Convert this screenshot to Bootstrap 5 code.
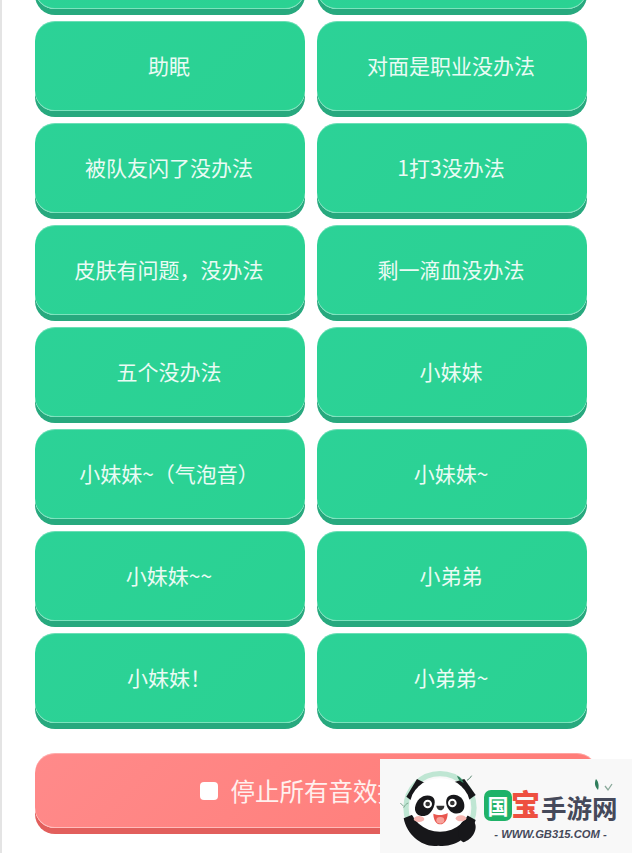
<!DOCTYPE html>
<html lang="zh">
<head>
<meta charset="utf-8">
<title>音效</title>
<link rel="stylesheet" href="https://cdn.jsdelivr.net/npm/bootstrap@5.3.0/dist/css/bootstrap.min.css">
<style>
html,body{height:853px;overflow:hidden;background:#fff}
body{font-family:"Noto Sans CJK SC","Noto Sans",sans-serif;border-left:2px solid #e4e4e4}
.sheet{padding:0 33px;margin-top:-81px;width:630px}
.sound-grid{display:grid;grid-template-columns:270px 270px;gap:12px;margin-bottom:30px}
.snd{height:90px;border:0;border-radius:20px;color:#eafbf4;font-size:21px;line-height:1;padding:0 2px 1px 0;
 background:linear-gradient(135deg,#2cd297,#2ad292);
 box-shadow:0 6px 0 #27a97e,inset 0 -1px 0 rgba(255,255,255,.38),inset 0 1px 0 rgba(255,255,255,.3)}
.snd-stop{width:562px;height:75px;border:0;border-radius:20px;color:#fff0ee;font-size:24.5px;line-height:1;padding:1px 6px 0 0;
 background:linear-gradient(135deg,#ff8a8a,#ff7b76);
 box-shadow:0 6px 0 #e25f5c,inset 0 -1px 0 rgba(255,255,255,.45),inset 0 1px 0 rgba(255,255,255,.3)}
.stop-mark{width:18px;height:18px;border-radius:4px;background:#fff;margin-right:13px}
.stamp{position:absolute;left:380px;top:759px;width:252px;height:94px;background:#f8f8f8}
.panda{position:absolute;left:15px;top:6px;width:90px;height:88px}
.sprig{position:absolute;left:214px;top:20px;width:20px;height:14px}
.stamp-words{position:absolute;left:104px;top:31px;width:138px}
.guo{width:28px;height:31px;border-radius:7px;background:#1fb268;color:#fff;font-size:21px;font-weight:700;line-height:1;flex:none}
.bao{color:#ee5040;font-size:29px;font-weight:900;line-height:1;margin-left:-1px;margin-top:-4px}
.shou{color:#45495a;font-size:25.5px;font-weight:700;line-height:1;margin-left:1px;letter-spacing:0;white-space:nowrap;margin-top:3px}
.url{color:#45495a;font-family:"Liberation Sans",sans-serif;font-size:11.2px;font-weight:700;font-style:italic;text-align:center;margin-top:8px;white-space:nowrap;line-height:1;padding-right:5px}
</style>
</head>
<body>
<main class="sheet">
  <div class="sound-grid">
    <button class="snd" type="button"></button>
    <button class="snd" type="button"></button>
    <button class="snd" type="button">助眠</button>
    <button class="snd" type="button">对面是职业没办法</button>
    <button class="snd" type="button">被队友闪了没办法</button>
    <button class="snd" type="button">1打3没办法</button>
    <button class="snd" type="button">皮肤有问题，没办法</button>
    <button class="snd" type="button">剩一滴血没办法</button>
    <button class="snd" type="button">五个没办法</button>
    <button class="snd" type="button">小妹妹</button>
    <button class="snd" type="button">小妹妹~（气泡音）</button>
    <button class="snd" type="button">小妹妹~</button>
    <button class="snd" type="button">小妹妹~~</button>
    <button class="snd" type="button">小弟弟</button>
    <button class="snd" type="button">小妹妹！</button>
    <button class="snd" type="button">小弟弟~</button>
  </div>
  <button class="snd-stop d-flex align-items-center justify-content-center" type="button">
    <span class="stop-mark"></span><span>停止所有音效播放</span>
  </button>
</main>
<aside class="stamp">
  <svg class="panda" viewBox="0 0 270 264" aria-hidden="true">
    <circle cx="135" cy="128" r="102" fill="none" stroke="#bfe6d3" stroke-width="16"/>
    <path d="M26 160 C36 212 85 250 130 242 C182 248 228 215 242 165 L215 150 H50Z" fill="#17171a"/>
    <path d="M34 95 L66 42 L98 58 L60 115Z" fill="#17171a"/>
    <path d="M176 52 L208 42 L242 90 L212 112Z" fill="#17171a"/>
    <ellipse cx="135" cy="120" rx="90" ry="80" fill="#fff"/>
    <path d="M60 128 C64 100 90 84 112 95 C126 104 118 132 102 147 C84 160 58 152 60 128Z" fill="#17171a"/>
    <path d="M208 120 C206 96 182 82 162 93 C148 102 152 128 168 140 C186 152 210 144 208 120Z" fill="#17171a"/>
    <circle cx="98" cy="117" r="13" fill="#fff"/><circle cx="98" cy="117" r="7" fill="#333"/>
    <circle cx="172" cy="114" r="13" fill="#fff"/><circle cx="172" cy="114" r="7" fill="#333"/>
    <path d="M124 122 H148 C148 132 140 136 136 136 C130 136 124 130 124 122Z" fill="#333"/>
    <path d="M115 146 C128 152 144 152 158 144 C158 165 148 178 136 178 C124 178 115 165 115 146Z" fill="#e8564e"/>
    <ellipse cx="136" cy="166" rx="12" ry="10" fill="#f7a29b"/>
    <ellipse cx="72" cy="162" rx="16" ry="9" fill="#f7b7b2"/>
    <ellipse cx="198" cy="160" rx="16" ry="9" fill="#f7b7b2"/>
    <path d="M193 190 C196 163 224 158 238 172 C250 190 234 224 205 232 C188 222 190 205 193 190Z" fill="#17171a"/>
    <path d="M186 32 C196 36 204 46 206 54 C196 50 188 42 186 32Z" fill="#2f7d5b"/>
    <path d="M216 46 L224 40 M224 40 L230 32" stroke="#5d8a74" stroke-width="3" fill="none"/>
    <path d="M16 114 L26 124 M26 128 C30 120 34 116 40 114" stroke="#7fa892" stroke-width="3" fill="none"/>
  </svg>
  <svg class="sprig" viewBox="0 0 20 14" aria-hidden="true">
    <path d="M2 0 C5 3 5 8 4 11 C1 8 0 4 2 0Z" fill="#2f7d5b"/>
    <path d="M11 7 L14 11 L18 5" stroke="#8aa99a" stroke-width="1.3" fill="none"/>
  </svg>
  <div class="stamp-words">
    <div class="d-flex align-items-center">
      <span class="guo d-flex align-items-center justify-content-center">国</span>
      <span class="bao">宝</span>
      <span class="shou">手游网</span>
    </div>
    <div class="url">- WWW.GB315.COM -</div>
  </div>
</aside>
<script src="https://cdn.jsdelivr.net/npm/bootstrap@5.3.0/dist/js/bootstrap.bundle.min.js"></script>
</body>
</html>
